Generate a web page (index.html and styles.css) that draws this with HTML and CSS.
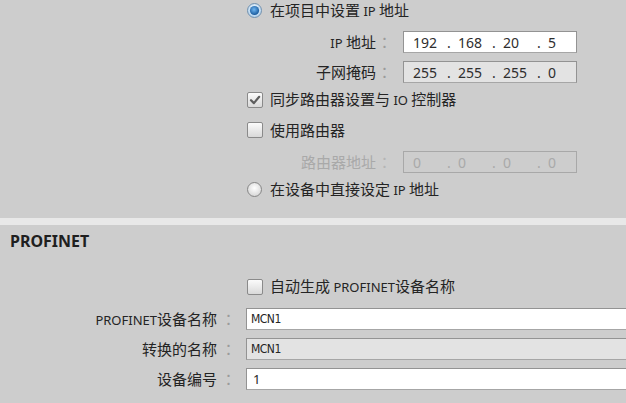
FILE: index.html
```html
<!DOCTYPE html>
<html lang="zh-CN">
<head>
<meta charset="utf-8">
<title>PROFINET</title>
<link rel="stylesheet" href="styles.css">
</head>
<body>
<div class="page">
  <section class="ip-section">
    <div class="opt-row">
      <span class="radio">
        <svg width="15" height="15" viewBox="0 0 15 15">
          <defs>
            <radialGradient id="rbOn" cx="50%" cy="40%" r="60%">
              <stop offset="0" stop-color="#ffffff"/>
              <stop offset="1" stop-color="#a9cdec"/>
            </radialGradient>
            <radialGradient id="rdOn" cx="45%" cy="40%" r="65%">
              <stop offset="0" stop-color="#6fb6f2"/>
              <stop offset="1" stop-color="#0d4f93"/>
            </radialGradient>
          </defs>
          <circle cx="7.5" cy="7.5" r="7" fill="url(#rbOn)" stroke="#7290ad"/>
          <circle cx="7.5" cy="7.5" r="4.6" fill="url(#rdOn)"/>
        </svg>
      </span>
      <span class="opt-text">在项目中设置 <span class="lat">IP</span> 地址</span>
    </div>

    <div class="field-row ip-row gap-ip">
      <span class="lbl"><span class="lat">IP</span> 地址</span>
      <span class="colon">：</span>
      <div class="field ip-field white">
        <span class="oct">192<i>.</i></span><span class="oct">168<i>.</i></span><span class="oct">20<i>.</i></span><span class="oct">5</span>
      </div>
    </div>

    <div class="field-row ip-row gap-mask">
      <span class="lbl">子网掩码</span>
      <span class="colon">：</span>
      <div class="field ip-field grey">
        <span class="oct">255<i>.</i></span><span class="oct">255<i>.</i></span><span class="oct">255<i>.</i></span><span class="oct">0</span>
      </div>
    </div>

    <div class="opt-row gap-sync">
      <span class="check on">
        <svg width="16" height="16" viewBox="0 0 16 16"><path d="M4 8.2 L6.9 11.1 L12.2 4.8" fill="none" stroke="#5e5e5e" stroke-width="2.2" stroke-linecap="round" stroke-linejoin="round"/></svg>
      </span>
      <span class="opt-text">同步路由器设置与 <span class="lat">IO</span> 控制器</span>
    </div>

    <div class="opt-row gap-use">
      <span class="check"></span>
      <span class="opt-text">使用路由器</span>
    </div>

    <div class="field-row ip-row disabled gap-router">
      <span class="lbl">路由器地址</span>
      <span class="colon">：</span>
      <div class="field ip-field off">
        <span class="oct">0<i>.</i></span><span class="oct">0<i>.</i></span><span class="oct">0<i>.</i></span><span class="oct">0</span>
      </div>
    </div>

    <div class="opt-row gap-direct">
      <span class="radio">
        <svg width="15" height="15" viewBox="0 0 15 15">
          <defs>
            <radialGradient id="rbOff" cx="50%" cy="40%" r="60%">
              <stop offset="0" stop-color="#ffffff"/>
              <stop offset="1" stop-color="#d6d6d6"/>
            </radialGradient>
          </defs>
          <circle cx="7.5" cy="7.5" r="7" fill="url(#rbOff)" stroke="#858585"/>
        </svg>
      </span>
      <span class="opt-text">在设备中直接设定 <span class="lat">IP</span> 地址</span>
    </div>
  </section>

  <div class="separator"></div>

  <section class="pn-section">
    <h2 class="pn-title">PROFINET</h2>

    <div class="opt-row gap-auto">
      <span class="check"></span>
      <span class="opt-text">自动生成 <span class="lat">PROFINET</span>设备名称</span>
    </div>

    <div class="field-row pn-row gap-name">
      <span class="lbl"><span class="lat">PROFINET</span>设备名称</span>
      <span class="colon">：</span>
      <div class="field wide white"><span class="narrow">MCN1</span></div>
    </div>

    <div class="field-row pn-row gap-pn">
      <span class="lbl">转换的名称</span>
      <span class="colon">：</span>
      <div class="field wide grey"><span class="narrow">MCN1</span></div>
    </div>

    <div class="field-row pn-row gap-pn">
      <span class="lbl">设备编号</span>
      <span class="colon">：</span>
      <div class="field wide white"><span class="num">1</span></div>
    </div>
  </section>
</div>
</body>
</html>
```

FILE: styles.css
```css
html, body {
  margin: 0;
  padding: 0;
}

body {
  width: 626px;
  height: 403px;
  overflow: hidden;
  background: #cdcdcd;
  color: #242424;
  font-family: "Noto Sans CJK SC", "Noto Sans", sans-serif;
  font-size: 15px;
}

.page {
  display: flex;
  flex-direction: column;
}

.ip-section,
.pn-section {
  display: flex;
  flex-direction: column;
}

.lat {
  font-family: "Noto Sans", sans-serif;
  font-size: 13px;
}

/* option rows (radio / checkbox) */
.opt-row {
  display: flex;
  align-items: center;
  height: 21px;
  padding-left: 247px;
  gap: 8px;
  white-space: nowrap;
}

.opt-text {
  line-height: 21px;
}

.radio {
  width: 15px;
  height: 15px;
  display: block;
  flex: none;
}

.radio svg,
.check svg {
  display: block;
}

.check {
  width: 14px;
  height: 14px;
  flex: none;
  border: 1px solid #8a8a8a;
  border-radius: 2px;
  background: linear-gradient(#fbfbfb, #d9d9d9);
  margin-right: -1px;
}

.check svg {
  margin: -1px;
}

/* label + field rows */
.field-row {
  display: flex;
  align-items: center;
  height: 22px;
  white-space: nowrap;
}

.lbl {
  text-align: right;
  line-height: 22px;
  flex: none;
}

.colon {
  width: 14px;
  flex: none;
  text-align: center;
  color: #9b9b9b;
  font-family: "Noto Sans CJK TC", sans-serif;
  line-height: 22px;
}

.ip-row .lbl {
  width: 376px;
}

.ip-row .colon {
  margin-left: 1px;
  margin-right: 12px;
}

.pn-row .lbl {
  width: 217px;
}

.pn-row .colon {
  margin-left: 4px;
  margin-right: 11px;
}

.field {
  box-sizing: border-box;
  height: 22px;
  border: 1px solid #939393;
  border-bottom-color: #a6a6a6;
  display: flex;
  align-items: center;
}

.field.white {
  background: #ffffff;
}

.field.grey {
  background: #e3e3e3;
}

.field.off {
  background: transparent;
  border-color: #a8a8a8;
  color: #a9a9a9;
}

.ip-field {
  width: 174px;
  padding-left: 9px;
  font-family: "Noto Sans", sans-serif;
  font-size: 14px;
  color: #2e2e2e;
}

.ip-field.off {
  color: #a9a9a9;
}

.oct {
  display: inline-flex;
  width: 45px;
  flex: none;
}

.oct i {
  font-style: normal;
  margin-left: auto;
  width: 11px;
}

.disabled .lbl {
  color: #a9a9a9;
}

.disabled .colon {
  color: #b5b5b5;
}

.wide {
  flex: 1;
  margin-right: -2px;
  padding-left: 4px;
}

.narrow {
  font-family: "DejaVu Sans Condensed", "Liberation Sans Narrow", "DejaVu Sans", sans-serif;
  font-stretch: condensed;
  font-size: 12px;
  letter-spacing: -0.5px;
  color: #242424;
}

.num {
  font-family: "Noto Sans", sans-serif;
  font-size: 13px;
  padding-left: 2px;
  color: #242424;
}

.separator {
  height: 7px;
  background: #e8e8e8;
  margin-top: 18px;
}

.pn-title {
  margin: 6px 0 0 0;
  padding-left: 10px;
  height: 21px;
  line-height: 21px;
  font-family: "Noto Sans", sans-serif;
  font-weight: bold;
  font-size: 16px;
  color: #1f1f1f;
}

/* vertical rhythm */
.gap-ip { margin-top: 10px; }
.gap-mask { margin-top: 8px; }
.gap-sync { margin-top: 6px; }
.gap-use { margin-top: 9px; }
.gap-router { margin-top: 11px; }
.gap-direct { margin-top: 6px; }
.gap-auto { margin-top: 24px; }
.gap-name { margin-top: 11px; }
.gap-pn { margin-top: 8px; }
```
